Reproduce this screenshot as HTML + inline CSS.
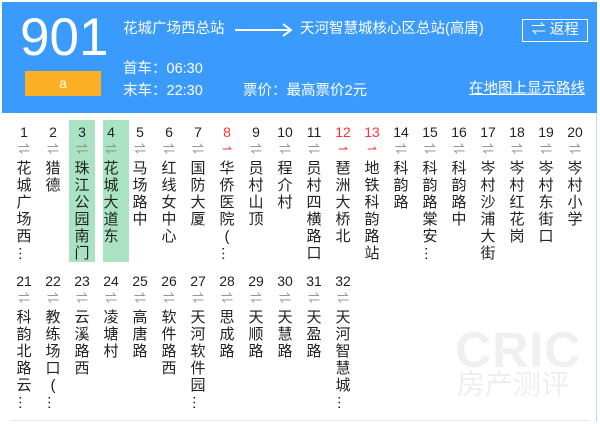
<!DOCTYPE html>
<html><head><meta charset="utf-8"><style>
body{margin:0;width:600px;height:424px;background:#fff;position:relative;overflow:hidden;font-family:"Liberation Sans","Noto Sans CJK SC",sans-serif;}
.hdr{position:absolute;left:2px;top:2px;width:595px;height:111px;background:#3b9bfd;color:#fff;}
.frame{position:absolute;left:2px;top:2px;width:595px;height:420px;border-right:1px solid #bcd9f5;box-sizing:border-box;}
.bline{position:absolute;left:10px;top:420px;width:580px;height:1px;background:#e6e6e6;}
.num{position:absolute;left:18px;top:6px;font-size:53px;line-height:60px;}
.yb{position:absolute;left:23px;top:69px;width:76px;height:25px;background:#fbb123;font-size:14px;text-align:center;line-height:24px;}
.t{position:absolute;font-size:14.5px;line-height:17px;white-space:nowrap;}
.ret{position:absolute;left:520px;top:17px;width:64px;height:21px;border:1px solid #fff;font-size:14.5px;line-height:21px;text-align:center;}
.col{position:absolute;width:20px;margin-left:-10px;text-align:center;color:#222;}
.col .n{font-size:14px;line-height:16px;height:16px;white-space:nowrap;margin-left:-5px;width:30px;}
.col .a{font-size:12px;line-height:12px;height:14px;color:#888;margin-top:3px;}
.col .s{font-size:15px;line-height:17px;margin-top:3px;}
.red .n{color:#f33;}
.red .a{color:#f33;}
.hl{position:absolute;background:#a9e3c3;}
.wm{position:absolute;left:455px;top:325px;color:#f0f0f0;font-size:50px;font-weight:bold;line-height:50px;letter-spacing:1px;}
.wm2{position:absolute;left:457px;top:370px;color:#eee;font-size:28px;line-height:30px;}
</style></head><body>
<div class="frame"></div>
<div class="hdr">
<div class="num">901</div>
<div class="yb">a</div>
<div class="t" style="left:121px;top:19px">花城广场西总站</div>
<svg style="position:absolute;left:232px;top:20px" width="60" height="16"><line x1="1" y1="8" x2="56" y2="8" stroke="#fff" stroke-width="2"/><polyline points="49,2 57,8 49,14" fill="none" stroke="#fff" stroke-width="2"/></svg>
<div class="t" style="left:298px;top:19px">天河智慧城核心区总站(高唐)</div>
<div class="ret">⇌ 返程</div>
<div class="t" style="left:121px;top:59px">首车：06:30</div>
<div class="t" style="left:121px;top:81px">末车：22:30</div>
<div class="t" style="left:241px;top:81px">票价：最高票价2元</div>
<div class="t" style="left:467px;top:79px;text-decoration:underline">在地图上显示路线</div>
</div>
<div class="hl" style="left:69px;top:120px;width:26px;height:142px"></div>
<div class="hl" style="left:103px;top:120px;width:26px;height:142px"></div>
<div id="r"></div>
<div class="bline"></div>
<div class="wm">CRIC</div>
<div class="wm2">房产测评</div>
<script>
var r1=["花城广场西…","猎德","珠江公园南门","花城大道东","马场路中","红线女中心","国防大厦","华侨医院(…","员村山顶","程介村","员村四横路口","琶洲大桥北","地铁科韵路站","科韵路","科韵路棠安…","科韵路中","岑村沙浦大街","岑村红花岗","岑村东街口","岑村小学"];
var r2=["科韵北路云…","教练场口(…","云溪路西","凌塘村","高唐路","软件路西","天河软件园…","思成路","天顺路","天慧路","天盈路","天河智慧城…"];
var h="";
function col(i,name,top,red){
 var x=24+i*29;
 var s=name.split("").map(function(c){return c=="…"?"<div style='line-height:17px;transform:rotate(90deg)'>"+c+"</div>":"<div>"+c+"</div>"}).join("");
 return "<div class='col"+(red?" red":"")+"' style='left:"+x+"px;top:"+top+"px'><div class='n'>"+"NUM"+"</div><div class='a'>"+(red?"⇀":"⇌")+"</div><div class='s'>"+s+"</div></div>";
}
r1.forEach(function(n,i){h+=col(i,n,124,[7,11,12].indexOf(i)>=0).replace("NUM",i+1);});
r2.forEach(function(n,i){h+=col(i,n,273,false).replace("NUM",i+21);});
document.getElementById("r").innerHTML=h;
</script>
</body></html>
